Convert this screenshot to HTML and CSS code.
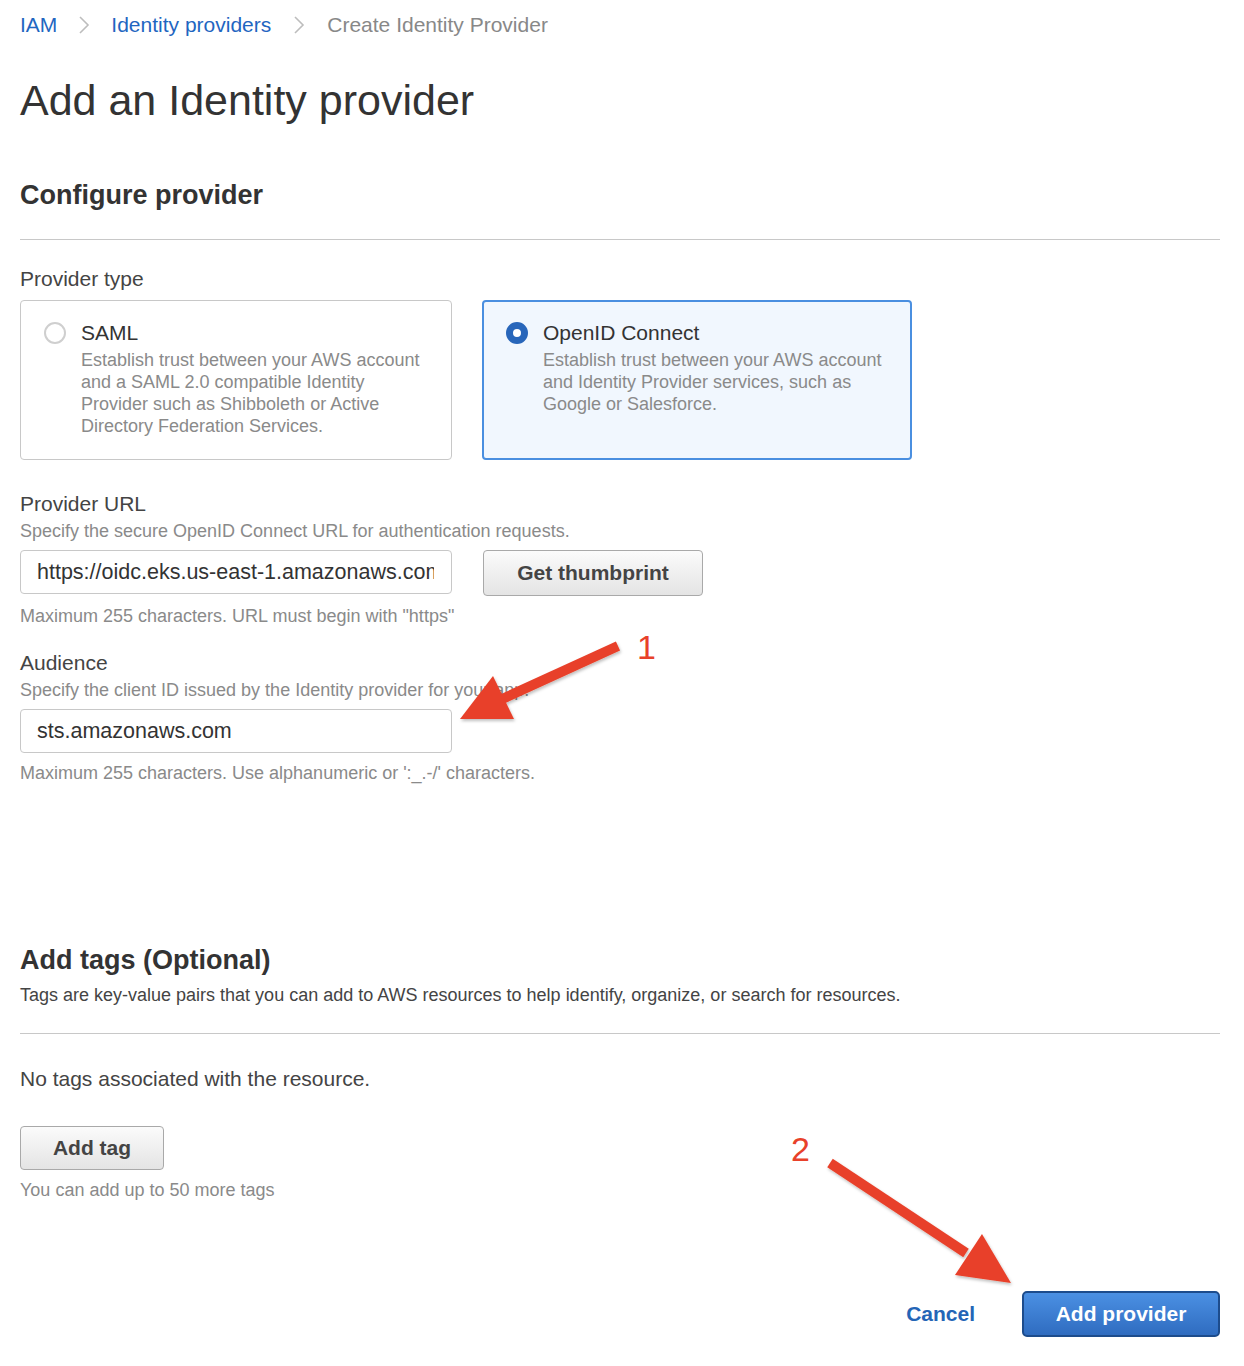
FILE: index.html
```html
<!DOCTYPE html>
<html>
<head>
<meta charset="utf-8">
<link rel="stylesheet" href="styles.css">
</head>
<body>
<div class="page">
  <nav class="crumbs">
    <a class="crumb-link">IAM</a>
    <span class="chev"><svg width="12" height="20" viewBox="0 0 12 20"><path d="M2 2 L10 10 L2 18" fill="none" stroke="#bdbdbd" stroke-width="1.6"/></svg></span>
    <a class="crumb-link">Identity providers</a>
    <span class="chev c2"><svg width="12" height="20" viewBox="0 0 12 20"><path d="M2 2 L10 10 L2 18" fill="none" stroke="#bdbdbd" stroke-width="1.6"/></svg></span>
    <span class="crumb-current">Create Identity Provider</span>
  </nav>

  <h1 class="title">Add an Identity provider</h1>

  <h2 class="section-title">Configure provider</h2>
  <div class="divider"></div>

  <div class="label first">Provider type</div>
  <div class="cards">
    <div class="card">
      <span class="radio"></span>
      <div class="card-body">
        <div class="card-title">SAML</div>
        <div class="card-desc">Establish trust between your AWS account and a SAML 2.0 compatible Identity Provider such as Shibboleth or Active Directory Federation Services.</div>
      </div>
    </div>
    <div class="card selected">
      <span class="radio on"></span>
      <div class="card-body">
        <div class="card-title">OpenID Connect</div>
        <div class="card-desc">Establish trust between your AWS account and Identity Provider services, such as Google or Salesforce.</div>
      </div>
    </div>
  </div>

  <div class="label field-label">Provider URL</div>
  <div class="hint">Specify the secure OpenID Connect URL for authentication requests.</div>
  <div class="input-row">
    <div class="input"><span class="input-text">https://oidc.eks.us-east-1.amazonaws.com</span></div>
    <button class="btn">Get thumbprint</button>
  </div>
  <div class="hint after">Maximum 255 characters. URL must begin with "https"</div>

  <div class="label field-label2">Audience</div>
  <div class="hint">Specify the client ID issued by the Identity provider for your app.</div>
  <div class="input-row">
    <div class="input"><span class="input-text">sts.amazonaws.com</span></div>
  </div>
  <div class="hint after">Maximum 255 characters. Use alphanumeric or ':_.-/' characters.</div>

  <h2 class="section-title tags-title">Add tags (Optional)</h2>
  <div class="section-desc">Tags are key-value pairs that you can add to AWS resources to help identify, organize, or search for resources.</div>
  <div class="divider d2"></div>

  <div class="notags">No tags associated with the resource.</div>
  <button class="btn add-tag">Add tag</button>
  <div class="hint after">You can add up to 50 more tags</div>

  <div class="actions">
    <button class="link-btn">Cancel</button>
    <button class="primary">Add provider</button>
  </div>
</div>

<svg class="annot" width="1244" height="1366" viewBox="0 0 1244 1366">
  <defs>
    <filter id="sh" x="-10%" y="-10%" width="130%" height="130%">
      <feDropShadow dx="1" dy="2" stdDeviation="1.5" flood-color="#000" flood-opacity="0.25"/>
    </filter>
  </defs>
  <g fill="#e8412a" stroke="#e8412a" filter="url(#sh)">
    <line x1="618" y1="646" x2="500" y2="700" stroke-width="10"/>
    <polygon points="460,719 493,676 514,719" stroke="none"/>
    <line x1="830" y1="1163" x2="966" y2="1253" stroke-width="10"/>
    <polygon points="1011,1283 982,1234 955,1275" stroke="none"/>
  </g>
</svg>
<span class="num n1">1</span>
<span class="num n2">2</span>
</body>
</html>
```

FILE: styles.css
```css
html, body {
  margin: 0;
  padding: 0;
  background: #fff;
}
body {
  position: relative;
  width: 1244px;
  min-height: 1366px;
  font-family: "Liberation Sans", Arial, sans-serif;
  color: #444;
}
.page {
  padding: 13px 24px 0 20px;
}
.crumbs {
  display: flex;
  align-items: center;
  height: 24px;
  font-size: 21px;
  line-height: 24px;
}
.crumb-link {
  color: #1f66c1;
}
.chev {
  display: inline-flex;
  margin: 0 21px 0 21px;
}
.chev.c2 {
  margin: 0 22px 0 22px;
}
.crumb-current {
  color: #888;
}
.title {
  margin: 36px 0 0;
  font-size: 43px;
  line-height: 54px;
  font-weight: normal;
  color: #333;
}
.section-title {
  margin: 52px 0 0;
  font-size: 27px;
  line-height: 32px;
  font-weight: bold;
  color: #333;
}
.divider {
  margin-top: 28px;
  height: 1px;
  background: #c8c8c8;
}
.label {
  font-size: 21px;
  line-height: 24px;
  color: #444;
}
.label.first {
  margin-top: 27px;
}
.cards {
  display: grid;
  grid-template-columns: 432px 430px;
  column-gap: 30px;
  margin-top: 9px;
}
.card {
  box-sizing: border-box;
  height: 160px;
  border: 1px solid #c8c8c8;
  border-radius: 4px;
  padding: 20px 20px 0 23px;
  display: flex;
  align-items: flex-start;
}
.card.selected {
  border: 2px solid #4a8fe0;
  background: #f1f7fe;
  padding: 19px 20px 0 22px;
}
.radio {
  flex: none;
  box-sizing: border-box;
  width: 22px;
  height: 22px;
  border-radius: 50%;
  border: 2px solid #cfcfcf;
  background: #fff;
  margin-top: 1px;
  margin-right: 15px;
}
.radio.on {
  border: 7px solid #2866ba;
  background: #fff;
}
.card-title {
  font-size: 21px;
  line-height: 24px;
  color: #333;
}
.card-desc {
  margin-top: 4px;
  font-size: 18px;
  line-height: 22px;
  color: #8a8a8a;
}
.field-label {
  margin-top: 32px;
}
.field-label2 {
  margin-top: 24px;
}
.hint {
  margin-top: 4px;
  font-size: 18px;
  line-height: 22px;
  color: #8a8a8a;
}
.hint.after {
  margin-top: 9px;
}
.input-row {
  display: flex;
  gap: 31px;
  margin-top: 8px;
}
.input {
  box-sizing: border-box;
  width: 432px;
  height: 44px;
  border: 1px solid #c8c8c8;
  border-radius: 4px;
  padding: 0 17px 0 16px;
  font-size: 21.5px;
  line-height: 42px;
  color: #333;
}
.input-text {
  display: block;
  white-space: nowrap;
  overflow: hidden;
}
.btn {
  box-sizing: border-box;
  width: 220px;
  height: 46px;
  border: 1px solid #a9a9a9;
  border-radius: 4px;
  background: linear-gradient(#fbfbfb, #e4e4e4);
  font-family: "Liberation Sans", Arial, sans-serif;
  font-size: 21px;
  font-weight: bold;
  color: #444;
  padding: 0;
}
.tags-title {
  margin-top: 160px;
}
.section-desc {
  margin-top: 8px;
  font-size: 18px;
  line-height: 22px;
  color: #444;
}
.divider.d2 {
  margin-top: 27px;
}
.notags {
  margin-top: 33px;
  font-size: 21px;
  line-height: 24px;
  color: #444;
}
.btn.add-tag {
  display: block;
  margin-top: 35px;
  width: 144px;
  height: 44px;
}
.actions {
  display: flex;
  justify-content: flex-end;
  align-items: center;
  margin-top: 90px;
}
.link-btn {
  border: none;
  background: none;
  padding: 0;
  margin-right: 47px;
  font-family: "Liberation Sans", Arial, sans-serif;
  font-size: 21px;
  font-weight: bold;
  color: #2465b6;
}
.primary {
  box-sizing: border-box;
  width: 198px;
  height: 46px;
  border: 2px solid #1d4c8c;
  border-radius: 5px;
  background: linear-gradient(#4b90e3, #2f6cc0);
  font-family: "Liberation Sans", Arial, sans-serif;
  font-size: 21px;
  font-weight: bold;
  color: #fff;
  padding: 0;
}
.annot {
  position: absolute;
  left: 0;
  top: 0;
  pointer-events: none;
}
.num {
  position: absolute;
  font-family: "Liberation Sans", Arial, sans-serif;
  font-size: 34px;
  line-height: 34px;
  color: #e8412a;
}
.n1 {
  left: 637px;
  top: 630px;
}
.n2 {
  left: 791px;
  top: 1132px;
}
```
